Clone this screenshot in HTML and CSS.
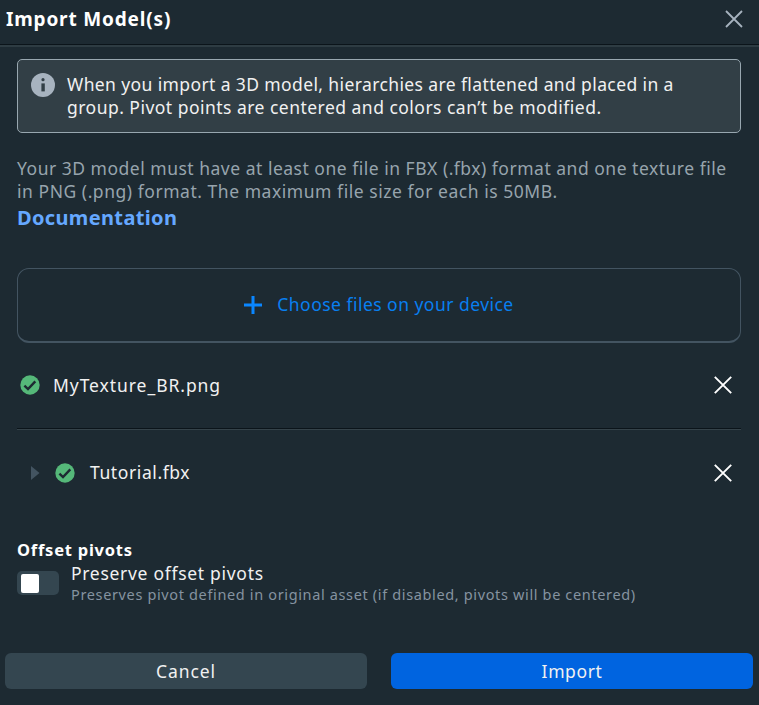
FILE: index.html
```html
<!DOCTYPE html>
<html lang="en">
<head>
<meta charset="utf-8">
<title>Import Model(s)</title>
<link rel="stylesheet" href="styles.css">
</head>
<body>
<div class="dialog">
  <header class="header">
    <h1 class="title">Import Model(s)</h1>
    <svg class="close" viewBox="0 0 18 18"><path d="M1 1L17 17M17 1L1 17"/></svg>
  </header>
  <main class="content">
    <div class="notice">
      <svg class="info" viewBox="0 0 24 24"><circle class="disc" cx="12" cy="12" r="12"/><circle cx="12" cy="6.7" r="1.6"/><path d="M10.4 10.4h3.4v8h-3.4z"/></svg>
      <p class="notice-text"><span class="n1">When you import a 3D model, hierarchies are flattened and placed in a</span><br><span class="n2">group. Pivot points are centered and colors can’t be modified.</span></p>
    </div>
    <p class="description"><span class="d1">Your 3D model must have at least one file in FBX (.fbx) format and one texture file</span><br><span class="d2">in PNG (.png) format. The maximum file size for each is 50MB.</span></p>
    <a class="docs">Documentation</a>
    <div class="upload">
      <svg class="plus" viewBox="0 0 18 18"><path d="M9 0V18M0 9H18"/></svg>
      <span>Choose files on your device</span>
    </div>
    <div class="file">
      <svg class="check" viewBox="0 0 20 20"><circle cx="10" cy="10" r="9.7"/><path d="M4.4 10.6L8 14.1L15.3 6.4"/></svg>
      <span class="name texture">MyTexture_BR.png</span>
      <svg class="remove" viewBox="0 0 18 18"><path d="M.8 .8L17.2 17.2M17.2 .8L.8 17.2"/></svg>
    </div>
    <div class="file nested">
      <svg class="arrow" viewBox="0 0 9 14"><path d="M0 0L8.5 7L0 14Z"/></svg>
      <svg class="check" viewBox="0 0 20 20"><circle cx="10" cy="10" r="9.7"/><path d="M4.4 10.6L8 14.1L15.3 6.4"/></svg>
      <span class="name">Tutorial.fbx</span>
      <svg class="remove" viewBox="0 0 18 18"><path d="M.8 .8L17.2 17.2M17.2 .8L.8 17.2"/></svg>
    </div>
    <h2 class="subtitle">Offset pivots</h2>
    <div class="option">
      <span class="toggle"><span class="knob"></span></span>
      <div>
        <div class="label">Preserve offset pivots</div>
        <div class="hint">Preserves pivot defined in original asset (if disabled, pivots will be centered)</div>
      </div>
    </div>
  </main>
  <footer class="footer">
    <button class="button cancel">Cancel</button>
    <button class="button import">Import</button>
  </footer>
</div>
</body>
</html>
```

FILE: styles.css
```css
* { box-sizing: border-box; }
body { margin: 0; background: #1d2a32; color: #f1f1f1; font: 17.5px/23px "Noto Sans", sans-serif; }
h1, h2, p { margin: 0; }
svg { display: block; flex: none; fill: none; }
.dialog { width: 759px; height: 705px; overflow: hidden; display: flex; flex-direction: column; }
.header { height: 47px; padding: 0 16px 8px 6px; display: flex; align-items: center; justify-content: space-between; border-bottom: 2px solid #2e3c43; box-shadow: inset 0 -1px #0b141a; }
.title { padding-top: 2px; font-size: 19px; font-weight: 700; letter-spacing: .83px; color: #fff; }
.close { width: 18px; height: 18px; stroke: #a7b3bf; stroke-width: 1.8; }
.content { padding: 12px 18px 0 17px; flex: 1; }
.notice { height: 74px; border: 1.5px solid #98a7b0; border-radius: 5px; background: #323f46; display: flex; gap: 12px; padding: 13px 0 0 13px; }
.info { width: 24px; height: 24px; fill: #323f46; }
.info .disc { fill: #a7b3bf; }
.notice-text { white-space: nowrap; }
.n1 { letter-spacing: .385px; }
.n2 { letter-spacing: .475px; }
.description { margin-top: 24px; color: #97a4ad; white-space: nowrap; }
.d1 { letter-spacing: .505px; }
.d2 { letter-spacing: .54px; }
.docs { display: block; margin-top: 3px; font-size: 20px; font-weight: 700; letter-spacing: .35px; color: #65a8ff; }
.upload { margin-top: 39px; height: 75px; padding-bottom: 1px; border: 1px solid #435461; border-bottom-width: 2px; border-radius: 12px; display: flex; align-items: center; justify-content: center; gap: 15px; color: #087ff0; letter-spacing: .47px; }
.plus { width: 18px; height: 18px; stroke: #0a86ff; stroke-width: 3; }
.file { height: 87px; padding: 0 9px 2px 3px; display: flex; align-items: center; border-bottom: 1px solid #35434a; box-shadow: inset 0 -1px #0b141a; }
.check { width: 20px; height: 20px; margin-right: 13px; stroke: #1d2a32; stroke-width: 2.4; }
.check circle { fill: #55b879; stroke: none; }
.name { flex: 1; letter-spacing: .6px; }
.texture { letter-spacing: .94px; }
.remove { width: 18px; height: 18px; stroke: #fff; stroke-width: 1.9; }
.nested { height: 85px; padding: 0 9px 0 14px; border: 0; box-shadow: none; }
.nested .check { margin-right: 15px; }
.arrow { width: 9px; height: 14px; margin-right: 15px; fill: #435461; }
.subtitle { margin-top: 23px; font-size: 16.5px; font-weight: 700; letter-spacing: .76px; color: #fff; }
.option { display: flex; gap: 12px; white-space: nowrap; }
.toggle { width: 42px; height: 24px; margin-top: 10px; padding: 3px 4px; border-radius: 5px; background: #344650; }
.knob { display: block; width: 18px; height: 19px; border-radius: 2px; background: #fff; }
.label { padding-top: 1px; letter-spacing: .7px; }
.hint { font-size: 14.5px; line-height: 19px; letter-spacing: .64px; color: #8593a0; }
.footer { display: flex; gap: 24px; height: 52px; padding: 0 6px 0 5px; }
.button { flex: 1; height: 36px; border: 0; border-radius: 6px; padding: 0; font: inherit; color: #f1f1f1; }
.cancel { background: #344650; letter-spacing: .9px; }
.import { background: #0064e0; letter-spacing: .6px; }
```
